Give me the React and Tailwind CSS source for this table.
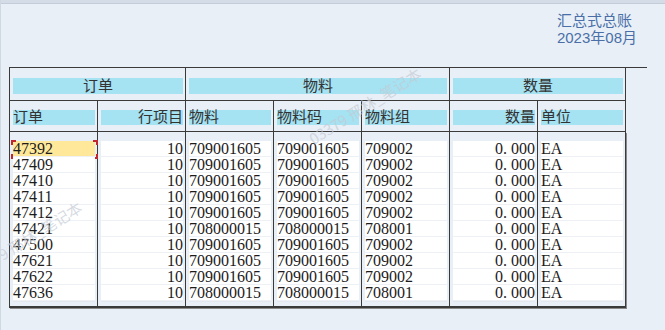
import React from "react";

const rows = [
  ["47392", "10", "709001605", "709001605", "709002", "0. 000", "EA"],
  ["47409", "10", "709001605", "709001605", "709002", "0. 000", "EA"],
  ["47410", "10", "709001605", "709001605", "709002", "0. 000", "EA"],
  ["47411", "10", "709001605", "709001605", "709002", "0. 000", "EA"],
  ["47412", "10", "709001605", "709001605", "709002", "0. 000", "EA"],
  ["47421", "10", "708000015", "708000015", "708001", "0. 000", "EA"],
  ["47500", "10", "709001605", "709001605", "709002", "0. 000", "EA"],
  ["47621", "10", "709001605", "709001605", "709002", "0. 000", "EA"],
  ["47622", "10", "709001605", "709001605", "709002", "0. 000", "EA"],
  ["47636", "10", "708000015", "708000015", "708001", "0. 000", "EA"],
];

const cols = [
  { label: "订单", right: false },
  { label: "行项目", right: true },
  { label: "物料", right: false },
  { label: "物料码", right: false },
  { label: "物料组", right: false },
  { label: "数量", right: true },
  { label: "单位", right: false },
];

const font = "font-['Liberation_Serif','Noto_Sans_CJK_SC',serif]";

function GroupCell({ label, span }) {
  return (
    <div className={`bg-[#e9eff6] pt-[10px] pb-[6px] pl-[3px] pr-[2px] ${span}`}>
      <div className="h-[16px] bg-[#a5e2f2] flex items-center justify-center text-[15px] leading-[16px] text-[#333]">
        {label}
      </div>
    </div>
  );
}

export default function App() {
  return (
    <div
      className={`relative w-[665px] h-[330px] overflow-hidden bg-[#e9eff6] border-l border-[#d0d8e2] ${font}`}
    >
      <div className="h-[4px] bg-[#d3dce7] border-b border-[#c3ccd8]" />

      <div className="flex justify-end pr-[28px] pt-[8px]">
        <div className="text-[15px] leading-[17px] text-[#4a6fa8] font-['Liberation_Sans','Noto_Sans_CJK_SC',sans-serif]">
          <div>汇总式总账</div>
          <div>2023年08月</div>
        </div>
      </div>

      <div className="mt-[21px] ml-[8px] w-[638px] h-px bg-[#3a3a3a]" />

      <div className="ml-[8px] w-[617px]">
        {/* group headers */}
        <div className="grid grid-cols-[repeat(7,87px)] gap-x-px px-px pb-px bg-[#3a3a3a]">
          <GroupCell label="订单" span="col-span-2" />
          <GroupCell label="物料" span="col-span-3" />
          <GroupCell label="数量" span="col-span-2" />
        </div>

        {/* column headers */}
        <div className="grid grid-cols-[repeat(7,87px)] gap-x-px px-px pb-px bg-[#3a3a3a]">
          {cols.map((c) => (
            <div key={c.label} className="bg-[#e9eff6] pt-[9px] pb-[6px] pl-[3px] pr-[2px]">
              <div
                className={`h-[15px] bg-[#a5e2f2] flex items-center text-[15px] leading-[15px] text-[#333] ${
                  c.right ? "justify-end" : "justify-start"
                }`}
              >
                {c.label}
              </div>
            </div>
          ))}
        </div>

        {/* data */}
        <div className="grid grid-cols-[repeat(7,87px)] gap-x-px px-px pb-[2px] bg-[#3a3a3a] shadow-[1px_1px_0_#8a8a8a]">
          {cols.map((c, ci) => (
            <div key={c.label} className="bg-[#e9eff6] pt-[9px] pb-[4px] pl-[3px] pr-[2px]">
              {rows.map((r, ri) => {
                const focused = ci === 0 && ri === 0;
                return (
                  <div
                    key={ri}
                    className={`relative h-[16px] border-b border-[#edf1f6] text-[16px] leading-[16px] text-[#1c1c1c] whitespace-pre ${
                      focused ? "bg-[#ffe89a]" : "bg-white"
                    } ${c.right ? "text-right" : "text-left"}`}
                  >
                    {r[ci]}
                    {focused && (
                      <>
                        <span className="absolute -left-[2px] -top-[1px] w-[5px] h-[5px] border-l-2 border-t-2 border-[#c0262d]" />
                        <span className="absolute -right-[3px] -top-[1px] w-[5px] h-[5px] border-r-2 border-t-2 border-[#c0262d]" />
                        <span className="absolute -left-[2px] -bottom-[3px] w-[5px] h-[5px] border-l-2 border-b-2 border-[#c0262d]" />
                        <span className="absolute -right-[3px] -bottom-[3px] w-[5px] h-[5px] border-r-2 border-b-2 border-[#c0262d]" />
                      </>
                    )}
                  </div>
                );
              })}
              <div className="h-[1px] bg-[#e3e8ee]" />
            </div>
          ))}
        </div>
      </div>

      {/* watermark */}
      <div className="pointer-events-none absolute left-[300px] top-[95px] -rotate-[32deg] text-[15px] text-[#c4cad3]/70 font-['Noto_Sans_CJK_SC',sans-serif] whitespace-nowrap">
        03379 邢林_笔记本
      </div>
      <div className="pointer-events-none absolute -left-[16px] top-[222px] -rotate-[32deg] text-[15px] text-[#c4cad3]/70 font-['Noto_Sans_CJK_SC',sans-serif] whitespace-nowrap">
        79 邢林_笔记本
      </div>
    </div>
  );
}
